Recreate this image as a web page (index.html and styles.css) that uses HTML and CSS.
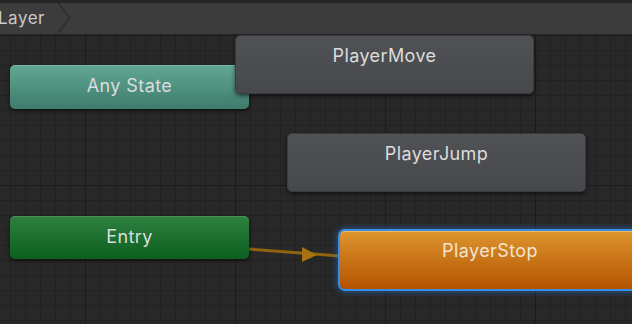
FILE: index.html
```html
<!DOCTYPE html>
<html>
<head>
    <title>Animator</title>
    <meta charset="UTF-8">
    <link rel="stylesheet" href="styles.css">
</head>
<body>
    <div class="window">
        <div class="breadcrumb-bar">
            <div class="crumb">Layer</div>
        </div>

        <div class="graph">
            <svg class="transitions" width="632" height="290" viewBox="0 0 632 290">
                <line x1="249" y1="215" x2="340" y2="222" stroke="#8f6410" stroke-width="3"/>
                <polygon points="302,213 317,221 302,228" fill="#a67310"/>
            </svg>

            <div class="node node-any">Any State</div>
            <div class="node node-state node-move">PlayerMove</div>
            <div class="node node-state node-jump">PlayerJump</div>
            <div class="node node-entry">Entry</div>
            <div class="node node-default node-stop">PlayerStop</div>
        </div>
    </div>
</body>
</html>
```

FILE: styles.css
```css
body {
    margin: 0;
    padding: 0;
    background: #282828;
    font-family: 'Inter', 'Noto Sans', sans-serif;
    overflow: hidden;
}

.window {
    width: 632px;
    height: 324px;
    display: flex;
    flex-direction: column;
    overflow: hidden;
}

.breadcrumb-bar {
    height: 31px;
    border-top: 3px solid #252525;
    background: #3c3c3c;
    display: flex;
    align-items: center;
    flex-shrink: 0;
}

.crumb {
    position: relative;
    height: 31px;
    line-height: 31px;
    padding-right: 30px;
    margin-left: -2px;
    color: #c9c9c9;
    font-size: 17px;
    letter-spacing: 0.5px;
}

/* chevron after the crumb */
.crumb::after {
    content: "";
    position: absolute;
    right: 5px;
    top: 4px;
    width: 20px;
    height: 20px;
    border-top: 2px solid #2e2e2e;
    border-right: 2px solid #2e2e2e;
    transform: scaleX(0.75) rotate(45deg);
    transform-origin: center;
}

.graph {
    position: relative;
    flex: 1;
    background-color: #282828;
    background-image:
        linear-gradient(to right, #1c1c1c 1px, transparent 1px),
        linear-gradient(to bottom, #1c1c1c 1px, transparent 1px),
        linear-gradient(to right, #222222 1px, transparent 1px),
        linear-gradient(to bottom, #222222 1px, transparent 1px);
    background-size: 150px 150px, 150px 150px, 15px 15px, 15px 15px;
    background-position: 85px 1px, 85px 1px, 10px 1px, 10px 1px;
}

.transitions {
    position: absolute;
    left: 0;
    top: 0;
    z-index: 1;
}

.node {
    position: absolute;
    box-sizing: border-box;
    padding-top: 11px;
    line-height: 20px;
    font-size: 18px;
    text-align: center;
    color: #dcdcdc;
    border-radius: 5px;
    letter-spacing: 0.4px;
    box-shadow: 0 2px 4px rgba(0, 0, 0, 0.55);
    z-index: 2;
}

.node-any {
    left: 10px;
    top: 31px;
    width: 239px;
    height: 44px;
    background: linear-gradient(#62a794, #3e7b6c);
    box-shadow: inset 0 1px 0 rgba(255, 255, 255, 0.15), 0 2px 4px rgba(0, 0, 0, 0.55);
}

.node-state {
    width: 299px;
    height: 59px;
    background: linear-gradient(#505256, #46484c);
    border: 1px solid #3a3b3e;
    padding-top: 10px;
}

.node-move {
    left: 235px;
    top: 1px;
    z-index: 3;
}

.node-jump {
    left: 287px;
    top: 99px;
}

.node-entry {
    left: 10px;
    top: 182px;
    width: 239px;
    height: 43px;
    background: linear-gradient(#2f8140, #0b5f1f);
    box-shadow: inset 0 1px 0 rgba(255, 255, 255, 0.15), 0 2px 4px rgba(0, 0, 0, 0.55);
}

.node-default {
    left: 340px;
    top: 197px;
    width: 300px;
    height: 58px;
    padding-top: 10px;
    color: #f1e4d2;
    background: linear-gradient(#de952f, #c46d12 60%, #b45300);
    box-shadow:
        inset 0 1px 0 rgba(255, 230, 180, 0.45),
        0 0 0 2px #3a8de0,
        0 0 6px 3px rgba(38, 125, 225, 0.55);
}
```
